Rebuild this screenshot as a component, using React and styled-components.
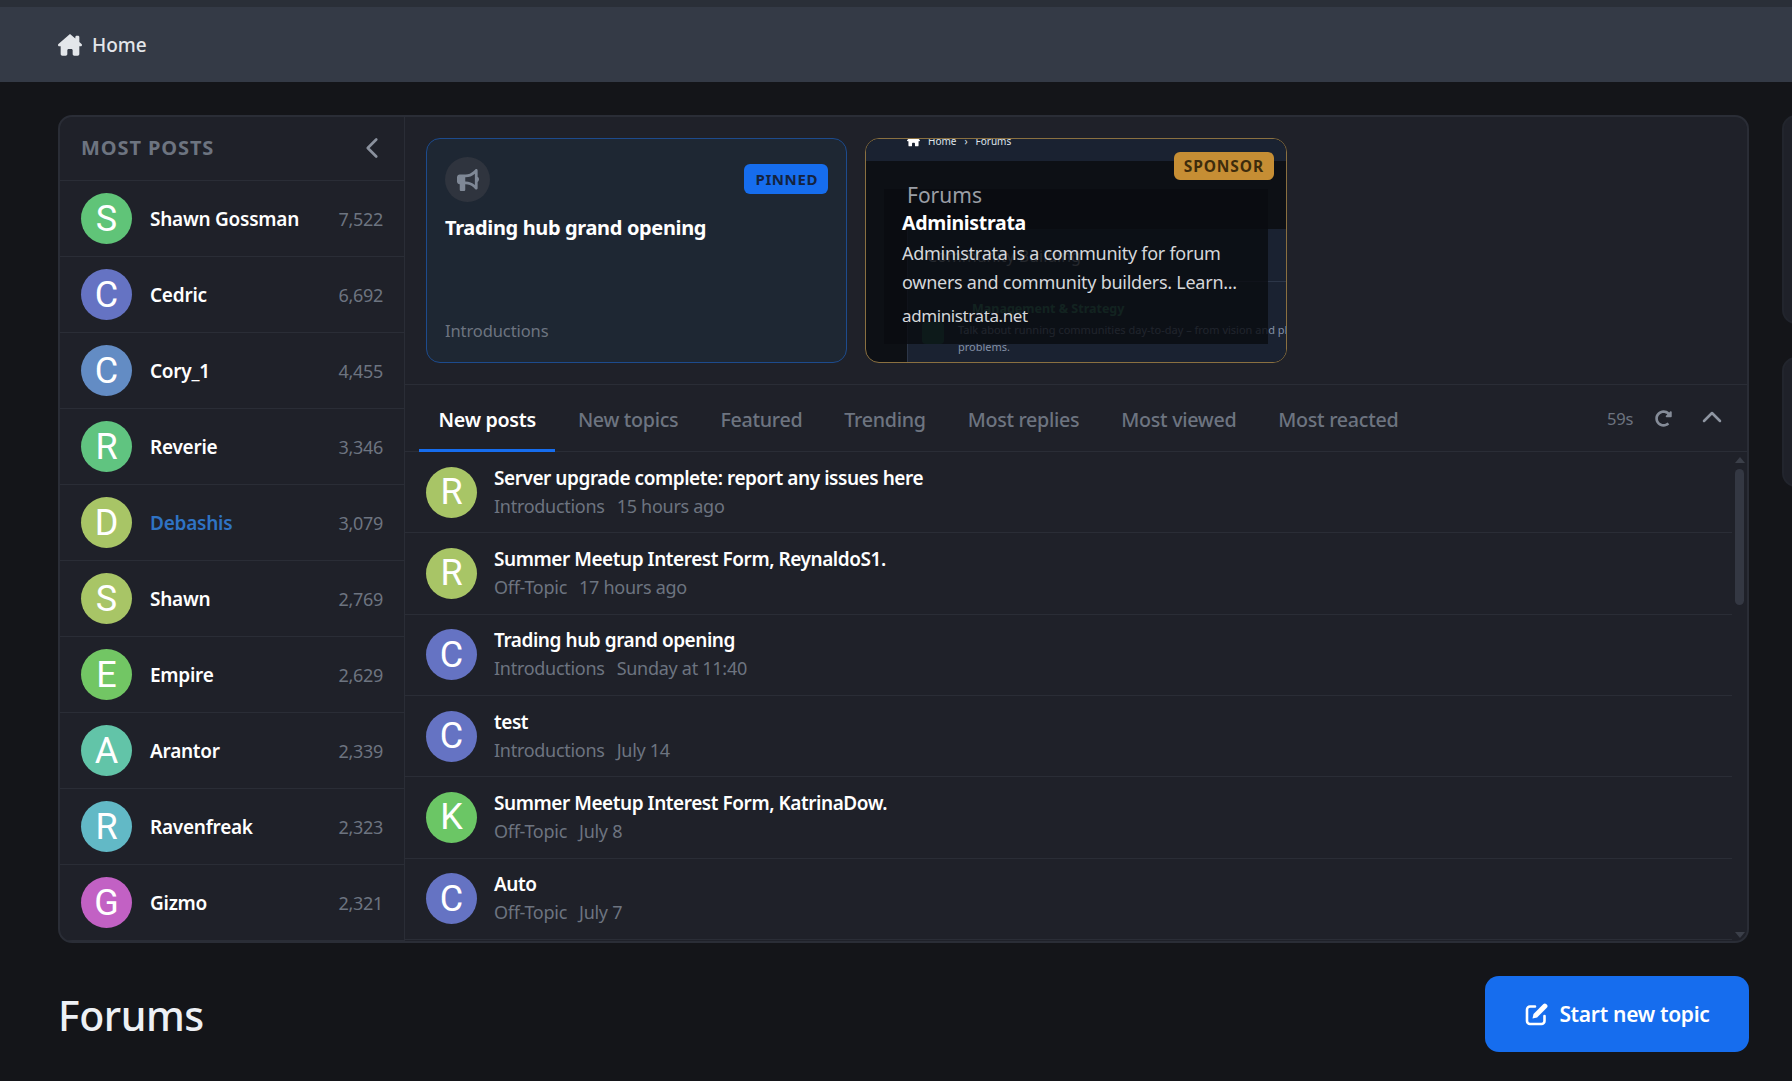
import React from "react";
import styled, { createGlobalStyle } from "styled-components";
import { FaRedoAlt } from "react-icons/fa";
import { FaHouseChimney, FaBullhorn } from "react-icons/fa6";
import { FiChevronLeft, FiChevronUp } from "react-icons/fi";

const GlobalStyle = createGlobalStyle`
  html, body {
    margin: 0;
    padding: 0;
    background: #141519;
    height: 1081px;
    overflow: hidden;
    font-family: "Noto Sans", "Open Sans", sans-serif;
  }
  * { box-sizing: border-box; }
`;

const members = [
  { name: "Shawn Gossman", count: "7,522", color: "#60c478" },
  { name: "Cedric", count: "6,692", color: "#6573c3" },
  { name: "Cory_1", count: "4,455", color: "#638cc4" },
  { name: "Reverie", count: "3,346", color: "#60c480" },
  { name: "Debashis", count: "3,079", color: "#a8c566", blue: true },
  { name: "Shawn", count: "2,769", color: "#a8c566" },
  { name: "Empire", count: "2,629", color: "#72c664" },
  { name: "Arantor", count: "2,339", color: "#62c4a8" },
  { name: "Ravenfreak", count: "2,323", color: "#62b9c6" },
  { name: "Gizmo", count: "2,321", color: "#c261c4" },
];

const topics = [
  { title: "Server upgrade complete: report any issues here", forum: "Introductions", time: "15 hours ago", letter: "R", color: "#a8c566" },
  { title: "Summer Meetup Interest Form, ReynaldoS1.", forum: "Off-Topic", time: "17 hours ago", letter: "R", color: "#a8c566" },
  { title: "Trading hub grand opening", forum: "Introductions", time: "Sunday at 11:40", letter: "C", color: "#6573c3" },
  { title: "test", forum: "Introductions", time: "July 14", letter: "C", color: "#6573c3" },
  { title: "Summer Meetup Interest Form, KatrinaDow.", forum: "Off-Topic", time: "July 8", letter: "K", color: "#6bc665" },
  { title: "Auto", forum: "Off-Topic", time: "July 7", letter: "C", color: "#6573c3" },
];

const tabs = ["New posts", "New topics", "Featured", "Trending", "Most replies", "Most viewed", "Most reacted"];

const EditIcon = () => (
  <svg width="24" height="24" viewBox="0 0 24 24" fill="none">
    <path
      d="M11 4.5H6a3 3 0 0 0-3 3V19a3 3 0 0 0 3 3h11.5a3 3 0 0 0 3-3v-5"
      stroke="#fff"
      strokeWidth="2.6"
      strokeLinecap="round"
    />
    <path d="M8.5 16.5l1-4.6L19.2 2.2a2.3 2.3 0 0 1 3.2 0l.4.4a2.3 2.3 0 0 1 0 3.2L13.1 15.5z" fill="#fff" />
  </svg>
);

const App = () => (
  <Page>
    <GlobalStyle />
    <TopStrip />
    <NavBar>
      <FaHouseChimney size={24} color="#e3e6ea" />
      <NavLabel>Home</NavLabel>
    </NavBar>
    <Content>
      <Panel>
        <Sidebar>
          <SideHeader>
            <SideTitle>MOST POSTS</SideTitle>
            <CollapseIcon>
              <FiChevronLeft size={34} color="#8a919d" strokeWidth={1.9} />
            </CollapseIcon>
          </SideHeader>
          {members.map((m) => (
            <MemberRow key={m.name}>
              <Avatar $color={m.color}>{m.name[0]}</Avatar>
              <MemberName $blue={m.blue}>{m.name}</MemberName>
              <MemberCount>{m.count}</MemberCount>
            </MemberRow>
          ))}
        </Sidebar>
        <Main>
          <Cards>
            <PinnedCard>
              <CardTop>
                <IconCircle>
                  <FaBullhorn size={22} color="#7f8896" />
                </IconCircle>
                <Badge $bg="#166dee" $fg="#14233f">PINNED</Badge>
              </CardTop>
              <CardTitle>Trading hub grand opening</CardTitle>
              <CardForum>Introductions</CardForum>
            </PinnedCard>
            <SponsorCard>
              <ShotBar>
                <ShotHome>
                  <FaHouseChimney size={13} color="#fff" />
                </ShotHome>
                <ShotCrumb>Home</ShotCrumb>
                <ShotCrumb>›</ShotCrumb>
                <ShotCrumb>Forums</ShotCrumb>
              </ShotBar>
              <ShotHeading>Forums</ShotHeading>
              <ShotForumBox>
                <ShotSection>Community Building</ShotSection>
                <ShotNode>
                  <ShotNodeIcon />
                  <div>
                    <ShotNodeTitle>Management &amp; Strategy</ShotNodeTitle>
                    <ShotNodeText>
                      Talk about running communities day-to-day – from vision and planning to solving
                      <br />
                      problems.
                    </ShotNodeText>
                  </div>
                </ShotNode>
              </ShotForumBox>
              <SponsorBadge>SPONSOR</SponsorBadge>
              <SponsorOverlay>
                <SponsorName>Administrata</SponsorName>
                <SponsorText>Administrata is a community for forum owners and community builders. Learn...</SponsorText>
                <SponsorUrl>administrata.net</SponsorUrl>
              </SponsorOverlay>
            </SponsorCard>
          </Cards>
          <TabBar>
            <TabList>
              {tabs.map((t, i) => (
                <Tab key={t} $active={i === 0}>{t}</Tab>
              ))}
            </TabList>
            <TabTools>
              <Timer>59s</Timer>
              <FaRedoAlt size={17} color="#858c98" />
              <CollapseUp>
                <FiChevronUp size={32} color="#8f96a2" strokeWidth={1.9} />
              </CollapseUp>
            </TabTools>
          </TabBar>
          <ListWrap>
            <TopicList>
              {topics.map((t) => (
                <TopicRow key={t.title}>
                  <Avatar $color={t.color}>{t.letter}</Avatar>
                  <TopicBody>
                    <TopicTitle>{t.title}</TopicTitle>
                    <TopicMeta>
                      <span>{t.forum}</span>
                      <span>{t.time}</span>
                    </TopicMeta>
                  </TopicBody>
                </TopicRow>
              ))}
            </TopicList>
            <ScrollTrack>
              <ArrowUp />
              <Thumb />
              <ArrowDown />
            </ScrollTrack>
          </ListWrap>
        </Main>
      </Panel>
      <SideStubs>
        <Stub $h={209} />
        <Stub $h={130} />
      </SideStubs>
    </Content>
    <TitleRow>
      <PageTitle>Forums</PageTitle>
      <PrimaryButton>
        <EditIcon />
        Start new topic
      </PrimaryButton>
    </TitleRow>
  </Page>
);

const Page = styled.div`
  width: 1792px;
  height: 1081px;
  overflow: hidden;
  background: #141519;
`;

const TopStrip = styled.div`
  height: 7px;
  background: #2a2f38;
`;

const NavBar = styled.div`
  height: 75px;
  padding: 0 58px;
  display: flex;
  align-items: center;
  gap: 10px;
  background: #343a46;
`;

const NavLabel = styled.span`
  font-size: 19px;
  font-weight: 500;
  color: #e3e6ea;
`;

const Content = styled.div`
  display: flex;
  gap: 33px;
  padding: 33px 0 0 58px;
`;

const Panel = styled.div`
  width: 1691px;
  height: 828px;
  flex: none;
  display: flex;
  background: #1f2129;
  border: 2px solid #2a2d36;
  border-radius: 14px;
  overflow: hidden;
`;

const Sidebar = styled.div`
  width: 345px;
  flex: none;
  border-right: 1px solid #2a2d36;
`;

const SideHeader = styled.div`
  height: 64px;
  padding: 0 21px;
  display: flex;
  align-items: center;
  justify-content: space-between;
  border-bottom: 1px solid #2a2d36;
`;

const SideTitle = styled.div`
  margin-top: -2px;
  font-size: 20px;
  font-weight: 700;
  letter-spacing: 0.9px;
  color: #6d7480;
`;

const CollapseIcon = styled.span`
  display: flex;
  margin: -2px -6px 0 0;
`;

const MemberRow = styled.div`
  height: 76px;
  padding: 0 21px;
  display: flex;
  align-items: center;
  border-bottom: 1px solid #2a2d36;
`;

const Avatar = styled.div`
  width: 51px;
  height: 51px;
  flex: none;
  border-radius: 50%;
  display: flex;
  align-items: center;
  justify-content: center;
  background: ${(p) => p.$color};
  color: #fff;
  font-family: "Roboto", sans-serif;
  font-size: 36px;
`;

const MemberName = styled.div`
  flex: 1;
  margin-left: 18px;
  font-size: 19px;
  font-weight: 600;
  letter-spacing: -0.25px;
  color: ${(p) => (p.$blue ? "#2f73c4" : "#fff")};
`;

const MemberCount = styled.div`
  font-size: 18px;
  letter-spacing: -0.3px;
  color: #6d7480;
`;

const Main = styled.div`
  flex: 1;
  min-width: 0;
  display: flex;
  flex-direction: column;
`;

const Cards = styled.div`
  height: 268px;
  flex: none;
  padding: 21px 21px 0;
  display: flex;
  gap: 18px;
  border-bottom: 1px solid #2a2d36;
`;

const PinnedCard = styled.div`
  width: 421px;
  height: 225px;
  padding: 18px;
  display: flex;
  flex-direction: column;
  background: #1e2733;
  border: 1px solid #1d4b8d;
  border-radius: 14px;
`;

const CardTop = styled.div`
  display: flex;
  align-items: center;
  justify-content: space-between;
`;

const IconCircle = styled.div`
  width: 45px;
  height: 45px;
  border-radius: 50%;
  display: flex;
  align-items: center;
  justify-content: center;
  background: #2f343e;
`;

const Badge = styled.span`
  margin-top: -1px;
  padding: 4px 10px 4px 11px;
  border-radius: 6px;
  background: ${(p) => p.$bg};
  color: ${(p) => p.$fg};
  font-size: 15px;
  font-weight: 700;
  letter-spacing: 0.6px;
  line-height: 22px;
`;

const CardTitle = styled.div`
  margin-top: 12px;
  font-size: 20px;
  font-weight: 700;
  letter-spacing: -0.36px;
  color: #fff;
`;

const CardForum = styled.div`
  margin-top: auto;
  margin-bottom: 2px;
  font-size: 16.5px;
  letter-spacing: -0.1px;
  color: #6d7480;
`;

const SponsorCard = styled.div`
  position: relative;
  width: 422px;
  height: 225px;
  overflow: hidden;
  background: #0d1015;
  border: 1px solid #8a7040;
  border-radius: 14px;
`;

const ShotBar = styled.div`
  height: 22px;
  padding: 0 41px;
  display: flex;
  align-items: flex-start;
  gap: 8px;
  background: #1a2231;
  overflow: hidden;
`;

const ShotHome = styled.span`
  display: flex;
  margin-top: -5px;
`;

const ShotCrumb = styled.span`
  margin-top: -6px;
  font-size: 10px;
  line-height: 16px;
  color: #dfe4ea;
`;

const ShotHeading = styled.div`
  position: relative;
  z-index: 1;
  height: 68px;
  padding: 20px 0 0 41px;
  font-size: 21px;
  color: #9a9ea5;
`;

const ShotForumBox = styled.div`
  margin-left: 41px;
  height: 140px;
  background: #1a2231;
  border-left: 1px solid #2c3648;
`;

const ShotSection = styled.div`
  height: 53px;
  padding: 16px 0 0 19px;
  font-size: 16px;
  color: #a0a6ae;
  border-bottom: 1px solid #2c3648;
`;

const ShotNode = styled.div`
  display: flex;
  gap: 14px;
  padding: 18px 0 0 14px;
  width: 640px;
`;

const ShotNodeIcon = styled.div`
  width: 22px;
  height: 22px;
  margin-top: 22px;
  flex: none;
  border-radius: 4px;
  background: #1f5a44;
`;

const ShotNodeTitle = styled.div`
  padding-left: 14px;
  font-size: 12.5px;
  font-weight: 700;
  color: #3a8a66;
`;

const ShotNodeText = styled.div`
  margin-top: 4px;
  font-size: 11px;
  line-height: 17px;
  white-space: nowrap;
  color: #8390a5;
`;

const SponsorBadge = styled.span`
  position: absolute;
  z-index: 2;
  top: 13px;
  right: 12px;
  padding: 3px 10px;
  border-radius: 6px;
  background: #c68e34;
  color: #3e2c0c;
  font-size: 15.5px;
  font-weight: 700;
  letter-spacing: 0.9px;
  line-height: 22px;
`;

const SponsorOverlay = styled.div`
  position: absolute;
  left: 18px;
  top: 50px;
  width: 384px;
  height: 155px;
  padding: 26px 0 0 18px;
  background: rgba(10, 12, 17, 0.82);
`;

const SponsorName = styled.div`
  margin-top: -6px;
  font-size: 19.5px;
  font-weight: 700;
  letter-spacing: -0.3px;
  color: #fff;
`;

const SponsorText = styled.div`
  margin-top: 3px;
  width: 345px;
  font-size: 18px;
  line-height: 29px;
  letter-spacing: -0.26px;
  color: #d5d7db;
`;

const SponsorUrl = styled.div`
  margin-top: 7px;
  font-size: 17px;
  letter-spacing: -0.4px;
  color: #d5d7db;
`;

const TabBar = styled.div`
  height: 67px;
  flex: none;
  padding: 0 19px 0 14px;
  display: flex;
  align-items: stretch;
  justify-content: space-between;
  border-bottom: 1px solid #2a2d36;
`;

const TabList = styled.div`
  display: flex;
  gap: 3px;
`;

const Tab = styled.div`
  display: flex;
  align-items: center;
  padding: 4px 19.5px 0 19.5px;
  margin-bottom: -1px;
  font-size: 19.7px;
  font-weight: ${(p) => (p.$active ? 600 : 500)};
  letter-spacing: -0.3px;
  color: ${(p) => (p.$active ? "#fff" : "#6d7480")};
  border-bottom: 3px solid ${(p) => (p.$active ? "#166dee" : "transparent")};
`;

const TabTools = styled.div`
  display: flex;
  align-items: center;
  gap: 22px;
`;

const CollapseUp = styled.span`
  display: flex;
  margin: -3px 0 0 2px;
`;

const Timer = styled.span`
  font-size: 16.5px;
  letter-spacing: -0.3px;
  color: #6d7480;
`;

const ListWrap = styled.div`
  flex: 1;
  min-height: 0;
  display: flex;
`;

const TopicList = styled.div`
  flex: 1;
  min-width: 0;
`;

const TopicRow = styled.div`
  height: 81.33px;
  padding: 0 21px;
  display: flex;
  align-items: center;
  gap: 17px;
  border-bottom: 1px solid #2a2d36;
`;

const TopicBody = styled.div`
  display: flex;
  flex-direction: column;
  gap: 3px;
  margin-top: -2px;
`;

const TopicTitle = styled.div`
  font-size: 19px;
  font-weight: 600;
  letter-spacing: -0.45px;
  color: #fff;
`;

const TopicMeta = styled.div`
  display: flex;
  gap: 12px;
  font-size: 18px;
  letter-spacing: -0.28px;
  color: #6d7480;
`;

const ScrollTrack = styled.div`
  width: 15px;
  flex: none;
  padding: 5px 3px 3px;
  display: flex;
  flex-direction: column;
  align-items: center;
`;

const ArrowUp = styled.div`
  width: 0;
  height: 0;
  border-left: 5px solid transparent;
  border-right: 5px solid transparent;
  border-bottom: 6px solid #3b3f49;
`;

const ArrowDown = styled.div`
  width: 0;
  height: 0;
  margin-top: auto;
  border-left: 5px solid transparent;
  border-right: 5px solid transparent;
  border-top: 6px solid #3b3f49;
`;

const Thumb = styled.div`
  width: 9px;
  height: 136px;
  margin-top: 6px;
  border-radius: 5px;
  background: #343843;
`;

const SideStubs = styled.div`
  display: flex;
  flex-direction: column;
  gap: 33px;
  flex: none;
`;

const Stub = styled.div`
  width: 60px;
  height: ${(p) => p.$h}px;
  background: #1f2129;
  border: 2px solid #22252d;
  border-radius: 14px;
`;

const TitleRow = styled.div`
  padding: 33px 43px 0 58px;
  display: flex;
  align-items: center;
  justify-content: space-between;
`;

const PageTitle = styled.h1`
  margin: 2px 0 0;
  font-size: 41px;
  font-weight: 500;
  letter-spacing: -0.45px;
  color: #edf0f5;
`;

const PrimaryButton = styled.button`
  width: 264px;
  height: 76px;
  display: flex;
  align-items: center;
  justify-content: center;
  gap: 11px;
  border: none;
  border-radius: 14px;
  background: #166dee;
  color: #fff;
  font-family: inherit;
  font-size: 21px;
  font-weight: 600;
  letter-spacing: -0.3px;
`;

export default App;
